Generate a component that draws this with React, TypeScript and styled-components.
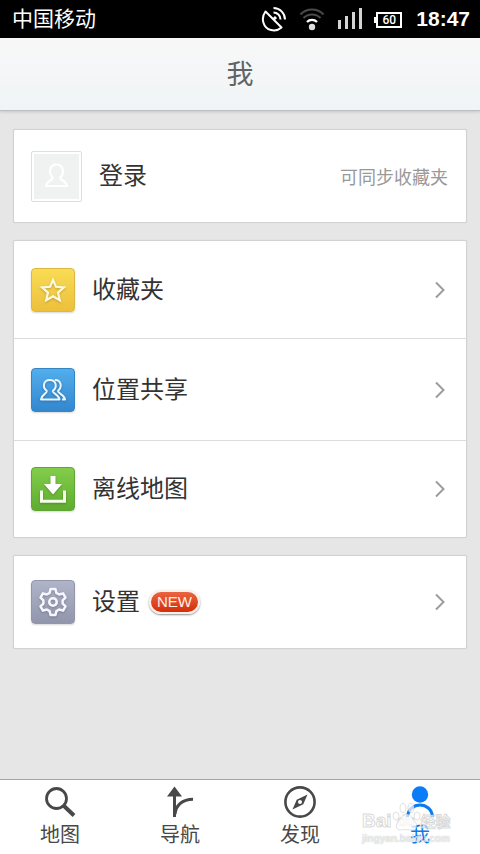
import React from "react";
import styled, { createGlobalStyle } from "styled-components";

const GlobalStyle = createGlobalStyle`
  *, *::before, *::after { box-sizing: border-box; }
  body {
    margin: 0;
    background: #e6e6e6;
    font-family: "Noto Sans CJK SC", "Noto Sans", sans-serif;
    color: #333;
  }
  button, a { font: inherit; color: inherit; }
`;

const Screen = styled.div`
  min-height: 100vh;
  display: flex;
  flex-direction: column;
  background: #e6e6e6;
`;

const StatusBar = styled.div`
  height: 38px;
  padding: 0 10px 0 12px;
  display: flex;
  align-items: center;
  justify-content: space-between;
  background: #000;
  color: #fff;
`;

const Carrier = styled.span`
  padding-bottom: 4px;
  font-size: 21px;
  line-height: 34px;
`;

const StatusIcons = styled.div`
  display: flex;
  align-items: center;
`;

const StatusSvg = styled.svg<{ $gap: number }>`
  display: block;
  margin-right: ${(p) => p.$gap}px;
`;

const Clock = styled.time`
  font: bold 21px/38px "Liberation Sans", Arial, sans-serif;
`;

const Header = styled.header`
  height: 73px;
  display: flex;
  justify-content: center;
  background: linear-gradient(#f8f8f8, #f0f4f6);
  border-bottom: 1px solid #bcbfc1;
  box-shadow: 0 1px 3px rgba(0, 0, 0, 0.14);
`;

const Title = styled.h1`
  margin: 0;
  font-size: 27px;
  line-height: 70px;
  font-weight: 400;
  color: #636363;
`;

const Main = styled.main`
  flex: 1;
  display: flex;
  flex-direction: column;
  gap: 17px;
  padding: 18px 13px;
`;

const Card = styled.section`
  background: #fff;
  border: 1px solid #d2d2d2;
  border-radius: 2px;
  box-shadow: 0 0 1px rgba(0, 0, 0, 0.12);
`;

const Row = styled.button<{ $height: number }>`
  width: 100%;
  height: ${(p) => p.$height}px;
  display: flex;
  align-items: center;
  padding: 0 18px 0 17px;
  border: 0;
  background: none;
  text-align: left;
  cursor: pointer;

  & + & { border-top: 1px solid #dcdcdc; }
`;

const Avatar = styled.span`
  width: 51px;
  height: 51px;
  margin-right: 17px;
  padding: 2px;
  border: 1px solid #dedede;
  border-radius: 2px;
  background: #fff;

  svg { display: block; width: 100%; height: 100%; background: #f0f2f2; }
`;

const Tile = styled.span<{ $from: string; $to: string; $edge: string }>`
  width: 44px;
  height: 44px;
  margin-right: 17px;
  border: 1px solid ${(p) => p.$edge};
  border-radius: 4px;
  background: linear-gradient(${(p) => p.$from}, ${(p) => p.$to});
  box-shadow: 0 1px 2px rgba(0, 0, 0, 0.16);

  svg {
    display: block;
    width: 42px;
    height: 42px;
    filter: drop-shadow(0 1px 1px rgba(0, 0, 0, 0.22));
  }
`;

const Label = styled.span`
  padding-bottom: 4px;
  font-size: 24px;
  line-height: 36px;
  color: #333;
`;

const Hint = styled.span`
  margin-left: auto;
  font-size: 18px;
  line-height: 28px;
  color: #999;
`;

const Badge = styled.span`
  height: 24px;
  margin-left: 9px;
  padding: 0 6px;
  border: 2px solid #fbf1e9;
  border-radius: 12px;
  background: linear-gradient(#ea6440, #d62d0a);
  box-shadow: 0 1px 2px rgba(0, 0, 0, 0.45);
  font: 15px/20px "Liberation Sans", Arial, sans-serif;
  color: #fff0e6;
`;

const Chevron = styled.svg`
  display: block;
  margin-left: auto;
`;

const TabBar = styled.nav`
  position: relative;
  height: 75px;
  display: grid;
  grid-template-columns: repeat(4, 1fr);
  background: #fff;
  border-top: 1px solid #a6a6a6;
`;

const Tab = styled.a<{ $active?: boolean }>`
  display: flex;
  flex-direction: column;
  align-items: center;
  padding-top: 5px;
  text-decoration: none;
  font-size: 20px;
  line-height: 30px;
  color: ${(p) => (p.$active ? "#0a7cf0" : "#484848")};

  svg { display: block; width: 34px; height: 34px; }
`;

const Watermark = styled.div`
  position: absolute;
  right: 26px;
  bottom: 9px;
  width: 92px;
  pointer-events: none;
  font-family: "Liberation Sans", "Noto Sans CJK SC", sans-serif;
  color: rgba(255, 255, 255, 0.7);
`;

const MarkBrand = styled.div`
  display: flex;
  align-items: center;
  font-size: 19px;
  line-height: 24px;
  font-weight: bold;
  white-space: nowrap;
  -webkit-text-stroke: 1px rgba(180, 180, 180, 0.5);
`;

const MarkPaw = styled.span`
  position: relative;
  width: 29px;
  text-align: center;
  font-size: 14px;

  svg { position: absolute; left: 0; bottom: 0; }
`;

const MarkChars = styled.span`
  font: bold 15px/24px "Noto Sans CJK SC", sans-serif;
`;

const MarkSite = styled.div`
  font-size: 10px;
  line-height: 12px;
  font-weight: bold;
  text-shadow: 0 0 1px rgba(130, 130, 130, 0.6);
`;

const SatelliteIcon = () => (
  <StatusSvg $gap={12} width="26" height="26" viewBox="0 0 26 26" fill="none" stroke="#fff" strokeWidth="2">
    <path d="M4.5 5.5C-.5 12 2 22 10 24c4 1 8-.3 10.500-2.500Z" strokeLinejoin="round" />
    <path d="M12.500 13.500 15 11" strokeWidth="3" />
    <path d="M12.500 6.500a7 7 0 0 1 7 7M12.500 2a11.500 11.500 0 0 1 11.500 11.500" />
  </StatusSvg>
);

const WifiIcon = () => (
  <StatusSvg $gap={13} width="26" height="24" viewBox="0 0 26 24" fill="none" strokeWidth="2">
    <path d="M1.500 7.500a16 16 0 0 1 23 0M4.500 11a12 12 0 0 1 17 0" stroke="#4b4b4b" />
    <path d="M8 15a7 7 0 0 1 10 0" stroke="#fff" strokeWidth="2.400" />
    <circle cx="13" cy="20" r="3.200" fill="#ddd" />
  </StatusSvg>
);

const SignalIcon = () => (
  <StatusSvg $gap={12} width="24" height="24" viewBox="0 0 24 24" fill="#d4d4d4">
    <rect x="0" y="13" width="3" height="9" />
    <rect x="7" y="9" width="3" height="13" />
    <rect x="14" y="5" width="3" height="17" />
    <rect x="21" y="1" width="3" height="21" />
  </StatusSvg>
);

const BatteryBody = styled.span`
  position: relative;
  width: 26px;
  height: 16px;
  margin: 2px 14px 0 2px;
  border: 2px solid #fff;
  font: 500 12px/12px "Roboto", sans-serif;
  text-align: center;

  &::before {
    content: "";
    position: absolute;
    left: -4px;
    top: 3px;
    width: 2px;
    height: 6px;
    background: #fff;
  }
`;

const PersonIcon = () => (
  <svg viewBox="0 0 45 45" fill="none" stroke="#fff" strokeWidth="2.200" strokeLinejoin="round">
    <path d="M19 23.500c-5-4-3.500-13 3.500-13s8.500 9 3.500 13c0 3 6 2.500 7 8.500H12c1-6 7-5.500 7-8.500Z" />
  </svg>
);

const StarIcon = () => (
  <svg viewBox="0 0 42 42" fill="none" stroke="#fff9e0" strokeWidth="2.200">
    <path d="m21 11 3 6.800 7.900.6-5.900 5.200 1.800 7.700-6.800-4.100-6.800 4.100 1.800-7.700-5.900-5.200 7.900-.6Z" />
  </svg>
);

const PeopleIcon = () => (
  <svg viewBox="0 0 42 42" fill="none" stroke="#e8f6ff" strokeWidth="2" strokeLinejoin="round">
    <path d="M14.800 22c-5-4-3.300-11 3-11s8 7 3 11c0 3 5.700 2.800 6.700 8.500H9c1-5.700 5.800-5.500 5.800-8.500Z" />
    <path d="M22.800 11c6-.5 8 7 3.200 11 0 3 6 2.800 7 8.500H30" />
  </svg>
);

const DownloadIcon = () => (
  <svg viewBox="0 0 42 42">
    <path d="M18.500 8h5v8h6.500l-9 10.500L12 16h6.500Z" fill="#fff" />
    <path d="M9.500 22.500v10.800h23V22.500" fill="none" stroke="#f4ffec" strokeWidth="3" />
  </svg>
);

const GearIcon = () => (
  <svg viewBox="2 2 38 38" fill="none" stroke="#f5f6ff" strokeWidth="2.300" strokeLinejoin="round">
    <path d="M18.800 9.200h4.400l.9 3.600 2.500 1.400 3.500-1 2.200 3.800-2.600 2.600v2.800l2.600 2.600-2.200 3.800-3.500-1-2.500 1.400-.9 3.600h-4.400l-.9-3.600-2.500-1.400-3.500 1-2.200-3.800 2.600-2.600v-2.800L9.700 17l2.200-3.800 3.500 1 2.500-1.400Z" />
    <circle cx="21" cy="21" r="3.400" />
  </svg>
);

const ChevronIcon = () => (
  <Chevron width="14" height="18" viewBox="0 0 14 18" fill="none" stroke="#9c9c9c" strokeWidth="2">
    <path d="m2 1.500 7.500 7.500L2 16.500" />
  </Chevron>
);

const SearchIcon = () => (
  <svg viewBox="0 0 34 34" fill="none" stroke="#484848">
    <circle cx="13.500" cy="13.500" r="10" strokeWidth="2.800" />
    <path d="m20.500 20.500 10.500 10" strokeWidth="4" />
  </svg>
);

const RouteIcon = () => (
  <svg viewBox="0 0 34 34" fill="none" stroke="#484848" strokeWidth="3">
    <path d="M11.500 32V9" />
    <path d="M4 11.500 11.500 1.500 19 11.500Z" fill="#484848" stroke="none" />
    <path d="M12 29c1-8.500 7-14.800 18-14.800" />
  </svg>
);

const CompassIcon = () => (
  <svg viewBox="0 0 34 34" fill="none" stroke="#484848">
    <circle cx="17" cy="17" r="14.600" strokeWidth="2.600" />
    <path d="m24.500 9.500-4.200 9.800-10.800 5.200 4.200-9.800Z" fill="#484848" stroke="none" />
    <circle cx="17" cy="17" r="2" fill="#fff" stroke="none" />
  </svg>
);

const MeIcon = () => (
  <svg viewBox="0 0 34 34" fill="none" stroke="#0a7cf0">
    <circle cx="17" cy="9.500" r="8.200" fill="#0a7cf8" stroke="none" />
    <path d="M4.500 32c1-16 24-16 25 0" strokeWidth="3" />
  </svg>
);

const PawIcon = () => (
  <svg width="29" height="32" viewBox="0 0 29 32" fill="rgba(255,255,255,0.7)" stroke="rgba(180,180,180,0.4)">
    <ellipse cx="4" cy="15" rx="3" ry="4" />
    <ellipse cx="11" cy="7" rx="3" ry="4.500" />
    <ellipse cx="19" cy="7" rx="3" ry="4.500" />
    <ellipse cx="25" cy="15" rx="3" ry="4" />
    <path d="M14.500 13c4 0 5 4 8 7s3 9-2 9c-4 0-8-1-12 0-5 0-5-6-2-9s4-7 8-7Z" />
  </svg>
);

const places = [
  { label: "收藏夹", icon: <StarIcon />, from: "#f9dc54", to: "#edc03c", edge: "#dcb840", height: 97 },
  { label: "位置共享", icon: <PeopleIcon />, from: "#52aeec", to: "#3387cf", edge: "#3585c4", height: 102 },
  { label: "离线地图", icon: <DownloadIcon />, from: "#82cd4a", to: "#60ac30", edge: "#5fa636", height: 97 },
];

const tabs = [
  { label: "地图", icon: <SearchIcon /> },
  { label: "导航", icon: <RouteIcon /> },
  { label: "发现", icon: <CompassIcon /> },
  { label: "我", icon: <MeIcon />, active: true },
];

export default function App() {
  return (
    <>
      <GlobalStyle />
      <Screen>
        <StatusBar>
          <Carrier>中国移动</Carrier>
          <StatusIcons>
            <SatelliteIcon />
            <WifiIcon />
            <SignalIcon />
            <BatteryBody>60</BatteryBody>
            <Clock>18:47</Clock>
          </StatusIcons>
        </StatusBar>
        <Header>
          <Title>我</Title>
        </Header>
        <Main>
          <Card>
            <Row $height={92}>
              <Avatar><PersonIcon /></Avatar>
              <Label>登录</Label>
              <Hint>可同步收藏夹</Hint>
            </Row>
          </Card>
          <Card>
            {places.map((p) => (
              <Row key={p.label} $height={p.height}>
                <Tile $from={p.from} $to={p.to} $edge={p.edge}>{p.icon}</Tile>
                <Label>{p.label}</Label>
                <ChevronIcon />
              </Row>
            ))}
          </Card>
          <Card>
            <Row $height={92}>
              <Tile $from="#b0b4c8" $to="#9296ac" $edge="#9396aa"><GearIcon /></Tile>
              <Label>设置</Label>
              <Badge>NEW</Badge>
              <ChevronIcon />
            </Row>
          </Card>
        </Main>
        <TabBar>
          {tabs.map((t) => (
            <Tab key={t.label} href="#" $active={t.active} aria-current={t.active ? "page" : undefined}>
              {t.icon}
              {t.label}
            </Tab>
          ))}
          <Watermark>
            <MarkBrand>
              <span>Bai</span>
              <MarkPaw><PawIcon />du</MarkPaw>
              <MarkChars>经验</MarkChars>
            </MarkBrand>
            <MarkSite>jingyan.baidu.com</MarkSite>
          </Watermark>
        </TabBar>
      </Screen>
    </>
  );
}
